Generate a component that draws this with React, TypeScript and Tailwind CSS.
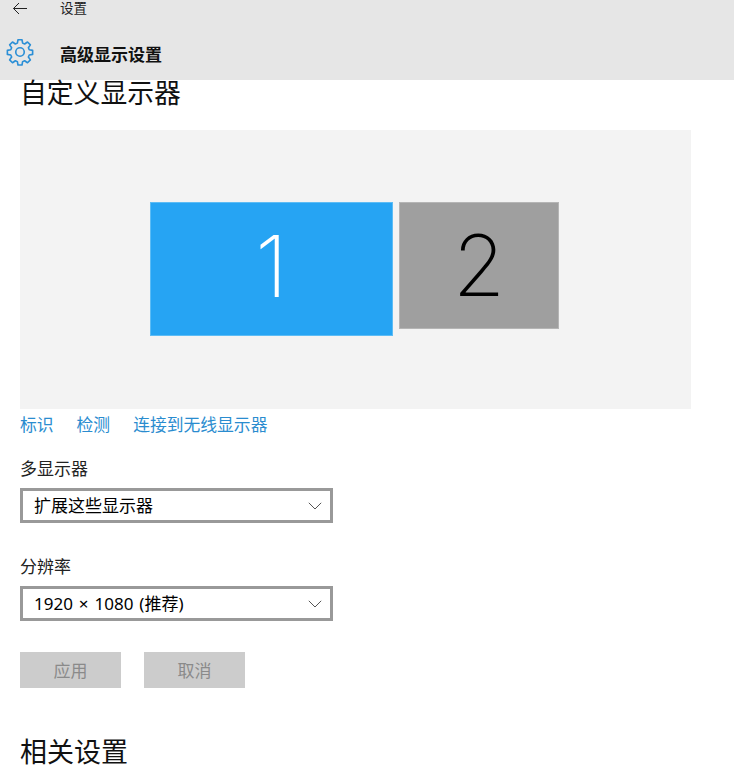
import React from "react";

const cjk = "font-['Noto_Sans','Noto_Sans_CJK_SC',sans-serif]";

function Chevron() {
  return (
    <svg width="14" height="8" viewBox="0 0 14 8" fill="none" stroke="#555" strokeWidth="1" className="shrink-0">
      <path d="M0.8 0.8 L7 7 L13.2 0.8" />
    </svg>
  );
}

function Select({ label }: { label: string }) {
  return (
    <div className="flex h-[35px] w-[313px] items-center justify-between border-[3px] border-[#999999] bg-white pl-[11px] pr-[8px] text-[17px] leading-none text-black [word-spacing:1.5px]">
      <span>{label}</span>
      <Chevron />
    </div>
  );
}

export default function App() {
  return (
    <div className={`h-[784px] w-[734px] overflow-hidden bg-white ${cjk}`}>
      <header className="h-[80px] bg-[#e6e6e6]">
        <div className="flex h-[18px] items-center">
          <svg width="16" height="14" viewBox="0 0 16 14" fill="none" stroke="#222" strokeWidth="1" className="ml-[12px]">
            <path d="M15 6.5 H1.5 M7 1 L1.5 6.5 L7 12" />
          </svg>
          <span className="ml-[32px] text-[13.5px] leading-none text-[#222]">设置</span>
        </div>
        <div className="mt-[19px] flex items-center">
          <svg width="30" height="30" viewBox="0 0 24 24" fill="none" stroke="#2b8fd6" strokeWidth="1.3" strokeLinejoin="round" strokeLinecap="round" className="ml-[5px]">
            <circle cx="12" cy="12" r="3.4" />
            <path d="M10.4 2.2h3.2l.5 2.7 1.6.7 2.3-1.6 2.3 2.3-1.6 2.3.7 1.6 2.7.5v3.2l-2.7.5-.7 1.6 1.6 2.3-2.3 2.3-2.3-1.6-1.6.7-.5 2.7h-3.2l-.5-2.7-1.6-.7-2.3 1.6-2.3-2.3 1.6-2.3-.7-1.6-2.7-.5v-3.2l2.7-.5.7-1.6-1.6-2.3 2.3-2.3 2.3 1.6 1.6-.7z" />
          </svg>
          <h1 className="ml-[25px] pt-[4px] text-[17px] font-bold leading-none text-[#111]">高级显示设置</h1>
        </div>
      </header>

      <main className="pl-[20px]">
        <h2 className="-mt-[1px] h-[51px] text-[26.8px] font-normal leading-[27px] text-[#111]">自定义显示器</h2>

        <section className="flex h-[279px] w-[671px] items-start gap-[6px] bg-[#f3f3f3] pl-[130px] pt-[72px] font-['Inter',sans-serif]">
          <div className="flex h-[134px] w-[243px] items-center justify-center border border-[#5cbcf5] bg-[#26a4f3] pb-[6px] text-[85px] font-extralight leading-none text-white">
            1
          </div>
          <div className="flex h-[127px] w-[160px] items-center justify-center border border-[#b5b5b5] bg-[#9f9f9f] text-[85px] font-extralight leading-none text-black">
            2
          </div>
        </section>

        <nav className="mt-[6px] flex h-[20px] items-center gap-[23px] text-[16.8px] leading-none text-[#2a8ccf]">
          <a>标识</a>
          <a>检测</a>
          <a>连接到无线显示器</a>
        </nav>

        <p className="mt-[24px] h-[20px] text-[17px] leading-[20px] text-[#222]">多显示器</p>
        <div className="mt-[9px]">
          <Select label="扩展这些显示器" />
        </div>

        <p className="mt-[34px] h-[20px] text-[17px] leading-[20px] text-[#222]">分辨率</p>
        <div className="mt-[9px]">
          <Select label="1920 × 1080 (推荐)" />
        </div>

        <div className="mt-[31px] flex gap-[23px]">
          <button className="h-[36px] w-[101px] bg-[#cccccc] text-[17px] leading-none text-[#8a8a8a]">应用</button>
          <button className="h-[36px] w-[101px] bg-[#cccccc] text-[17px] leading-none text-[#8a8a8a]">取消</button>
        </div>

        <h2 className="mt-[48px] text-[27px] font-normal leading-[32px] text-[#111]">相关设置</h2>
      </main>
    </div>
  );
}
